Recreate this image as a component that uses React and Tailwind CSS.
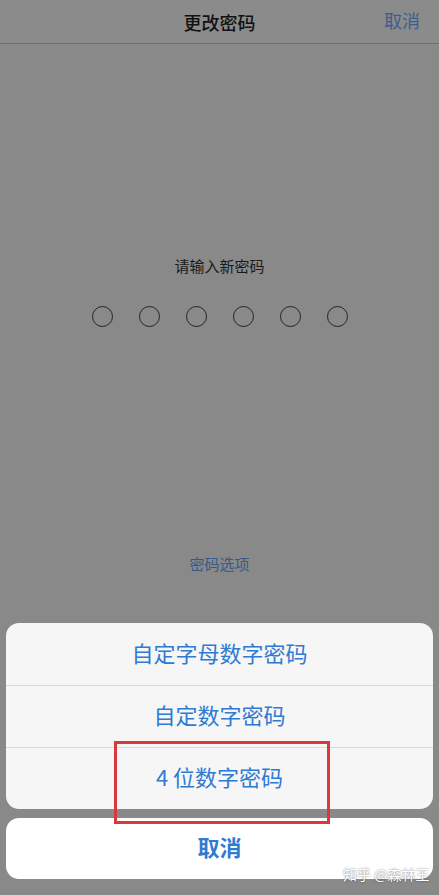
import React from "react";

const options = ["自定字母数字密码", "自定数字密码", "4 位数字密码"];

export default function App() {
  return (
    <div
      className="relative flex h-[895px] w-[439px] flex-col overflow-hidden bg-[#898989]"
      style={{ fontFamily: '"Noto Sans CJK SC", "Noto Sans", sans-serif' }}
    >
      {/* Nav bar */}
      <div className="relative flex h-[44px] shrink-0 items-center justify-center border-b border-[#6f6f6f] bg-[#8b8b8b]">
        <span className="text-[18px] font-medium leading-none text-[#111]">更改密码</span>
        <span className="absolute right-[19px] top-[11px] text-[18px] leading-none text-[#3c5e8e]">取消</span>
      </div>

      {/* Passcode entry */}
      <div className="flex flex-col items-center pt-[212px]">
        <div className="text-[15px] leading-[20px] text-[#1a1a1a]">请输入新密码</div>
        <div className="mt-[30px] flex justify-center gap-[26px]">
          {[0, 1, 2, 3, 4, 5].map((i) => (
            <div key={i} className="h-[21px] w-[21px] rounded-full border-[1.5px] border-[#222]" />
          ))}
        </div>
        <div className="mt-[227px] text-[15px] leading-[20px] text-[#365a8a]">密码选项</div>
      </div>

      {/* Action sheet */}
      <div className="mt-auto flex flex-col gap-[9px] px-[6px] pb-[16px]">
        <div className="overflow-hidden rounded-[13px] bg-[#f6f6f6]">
          {options.map((label, i) => (
            <div
              key={label}
              className={`flex h-[62px] items-center justify-center pb-[5px] text-[22px] leading-none text-[#2f7ad3] ${
                i === 0 ? "" : "border-t border-[#d9d9d9]"
              }`}
            >
              {label}
            </div>
          ))}
        </div>
        <div className="flex h-[61px] items-center justify-center rounded-[13px] bg-white pb-[5px] text-[22px] font-semibold leading-none text-[#2f7ad3]">
          取消
        </div>
      </div>

      {/* Highlight box */}
      <div className="absolute left-[114px] top-[741px] h-[83px] w-[216px] border-[3px] border-[#d83a3b]" />

      {/* Watermark */}
      <div className="absolute left-[343px] top-[865px] text-[14px] leading-[18px] text-white [text-shadow:0_0_2px_rgba(0,0,0,0.6)]">
        知乎 @森林王
      </div>
    </div>
  );
}
